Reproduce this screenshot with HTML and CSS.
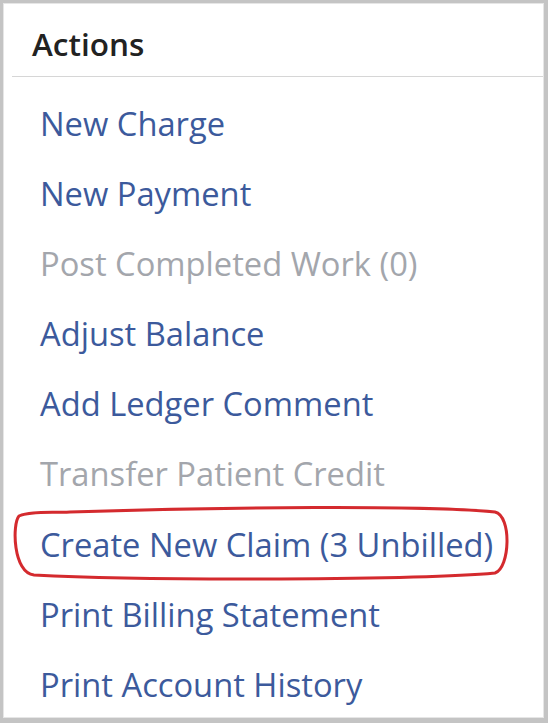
FILE: index.html
```html
<!DOCTYPE html>
<html>
<head>
<meta charset="utf-8">
<link rel="stylesheet" href="styles.css">
</head>
<body>
<div class="frame">
  <div class="panel">
    <h2 class="title">Actions</h2>
    <div class="divider"></div>
    <ul class="actions">
      <li><a class="link">New Charge</a></li>
      <li><a class="link">New Payment</a></li>
      <li><span class="link disabled">Post Completed Work (0)</span></li>
      <li><a class="link">Adjust Balance</a></li>
      <li><a class="link">Add Ledger Comment</a></li>
      <li><span class="link disabled">Transfer Patient Credit</span></li>
      <li><a class="link">Create New Claim (3 Unbilled)</a></li>
      <li><a class="link">Print Billing Statement</a></li>
      <li><a class="link">Print Account History</a></li>
    </ul>
  </div>
  <svg class="annotation" width="548" height="723" viewBox="0 0 548 723">
    <path d="M 70 512 C 220 507, 430 505, 495 512 C 512 516, 510 568, 495 573 C 420 580, 150 581, 34 575 C 13 573, 12 524, 19 516 C 30 511, 50 513, 70 512 Z" fill="none" stroke="#d42a2e" stroke-width="3"/>
  </svg>
</div>
</body>
</html>
```
FILE: styles.css
```css
html, body {
  margin: 0;
  padding: 0;
  background: #ffffff;
}
.frame {
  position: relative;
  width: 548px;
  height: 723px;
  box-sizing: border-box;
  border-style: solid;
  border-color: #c4c4c4;
  border-width: 3px 4px 5px 3px;
  font-family: "Open Sans", "Liberation Sans", sans-serif;
}
.panel {
  height: 100%;
  box-sizing: border-box;
  border: 1px solid #e6e6e6;
  background: #fff;
}
.title {
  margin: 0;
  padding: 19.5px 0 12.5px 28px;
  font-size: 31.5px;
  line-height: 40px;
  font-weight: 600;
  color: #222;
}
.divider {
  height: 1px;
  margin-left: 8px;
  background: #d6d6d6;
}
.actions {
  list-style: none;
  margin: 0;
  padding: 11.5px 0 0 36px;
}
.actions li {
  height: 70.2px;
  line-height: 70px;
  font-size: 32.7px;
}
.link {
  color: #3c5a9c;
  text-decoration: none;
}
.link.disabled {
  color: #a3a6ac;
}
.annotation {
  position: absolute;
  top: -3px;
  left: -3px;
  pointer-events: none;
}
```
